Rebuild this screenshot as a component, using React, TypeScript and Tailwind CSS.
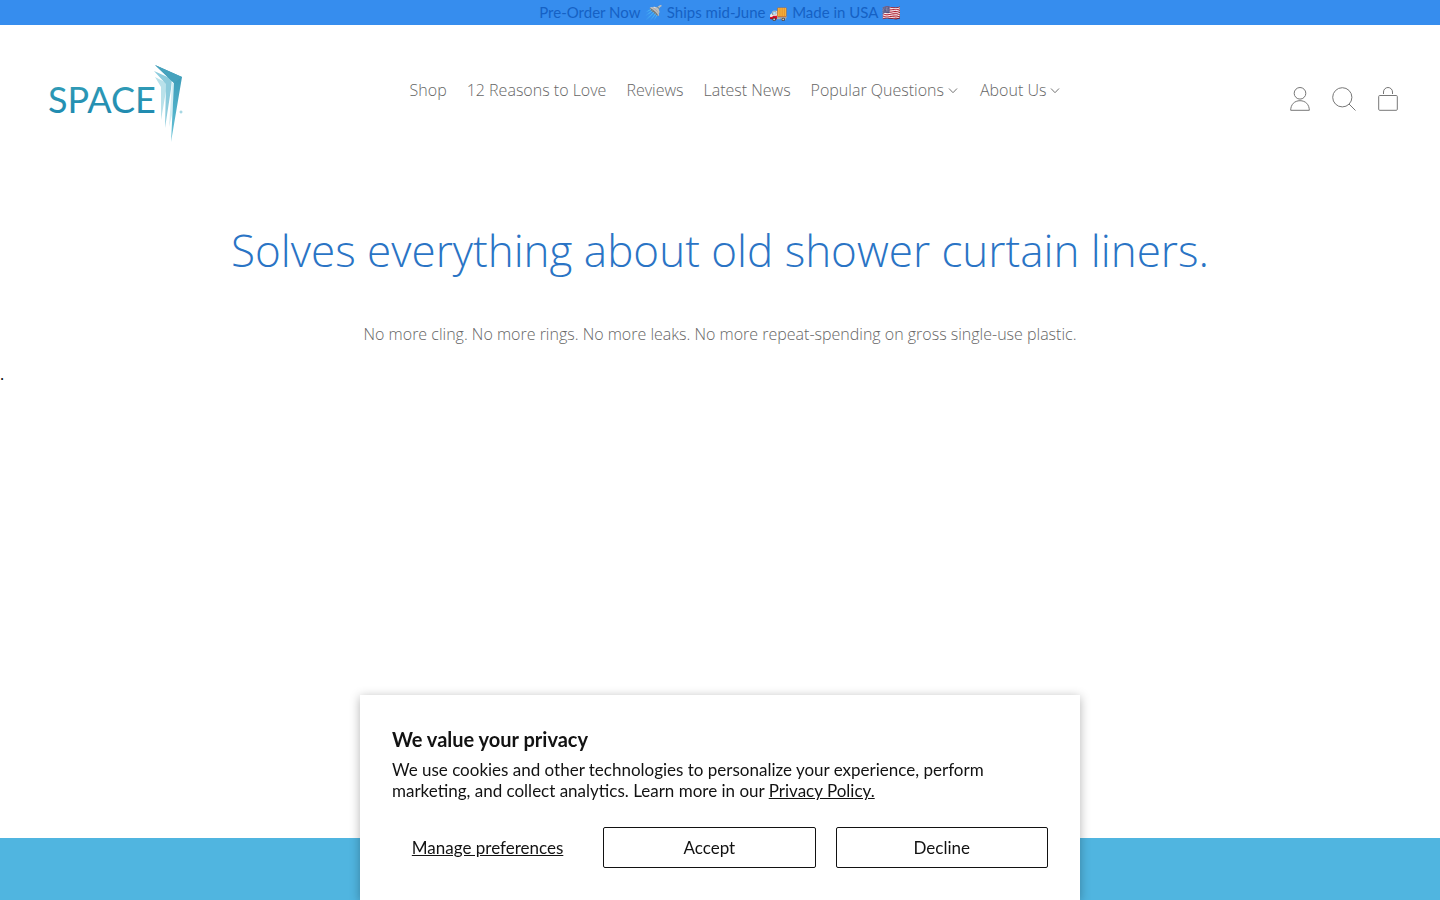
import { FC } from 'react';

type NavItem = { label: string; href: string; menu?: boolean };

const navItems: NavItem[] = [
  { label: 'Shop', href: '#shop' },
  { label: '12 Reasons to Love', href: '#reasons' },
  { label: 'Reviews', href: '#reviews' },
  { label: 'Latest News', href: '#news' },
  { label: 'Popular Questions', href: '#questions', menu: true },
  { label: 'About Us', href: '#about', menu: true },
];

const Logo: FC = () => (
  <svg width="136" height="80" viewBox="0 0 136 80" role="img" aria-label="SPACE">
    <defs>
      <linearGradient id="word" x1="0" y1="0" x2="0" y2="1">
        <stop offset="0" stopColor="#35a0b8" />
        <stop offset="1" stopColor="#1c86ae" />
      </linearGradient>
      <linearGradient id="blade" x1="0" y1="0" x2="0" y2="1">
        <stop offset="0" stopColor="#3796b3" />
        <stop offset="0.6" stopColor="#4fb0c9" />
        <stop offset="1" stopColor="#6cc4d8" />
      </linearGradient>
    </defs>
    <text
      x="0"
      y="48"
      fill="url(#word)"
      className="font-['Lato',sans-serif] text-[36px]"
    >
      SPACE
    </text>
    <path d="M107 12 L119 18 L118 26 L113 55 L113 22 Z" fill="#b9e1ea" />
    <path d="M106 6 L124 14 L123 24 L117 63 L118 19 Z" fill="#8ccbdc" />
    <path d="M124 18 L127 17 L124 50 L121 62 Z" fill="#d3edf3" />
    <path d="M107 0 L134 12 L123 77 L126 18 Z" fill="url(#blade)" />
    <path d="M107 0 L134 12 L126 18 Z" fill="#46a2bd" />
    <circle cx="133" cy="47" r="1" fill="none" stroke="#8bcbdc" />
  </svg>
);

const Caret: FC = () => (
  <svg width="12" height="8" viewBox="0 0 12 8" fill="none" stroke="#747474" aria-hidden="true">
    <path d="M1 2.5 L5 6.7 L9 2.5" />
  </svg>
);

const Navbar: FC = () => {
  return (
    <header className="flex items-start justify-between pt-10 pr-10 pl-12">
      <a href="#home">
        <Logo />
      </a>
      <nav className="flex gap-5 pt-[13px] text-[16px] leading-6 font-light text-[#666]">
        {navItems.map((item) => (
          <a key={item.label} href={item.href} className="flex items-center gap-1">
            {item.label}
            {item.menu && <Caret />}
          </a>
        ))}
      </nav>
      <div className="flex gap-5 pt-[22px]">
        <a href="#account" aria-label="Account">
          <svg width="24" height="24" viewBox="0 0 24 24" fill="none" stroke="#777">
            <circle cx="12" cy="6.3" r="5.8" />
            <path d="M2.7 23.3 C2.7 17.5 6.5 13.7 12 13.7 S21.3 17.5 21.3 23.3 Z" strokeLinejoin="round" />
          </svg>
        </a>
        <button type="button" aria-label="Search">
          <svg width="24" height="24" viewBox="0 0 24 24" fill="none" stroke="#777">
            <circle cx="10.3" cy="10.3" r="9.6" />
            <path d="M17 17 L23.5 23.5" />
          </svg>
        </button>
        <a href="#cart" aria-label="Cart">
          <svg width="24" height="24" viewBox="0 0 24 24" fill="none" stroke="#777">
            <rect x="2.7" y="8.5" width="18.6" height="14.8" rx="1" />
            <path d="M7.5 7 V5 A4.5 4.5 0 0 1 16.5 5 V7" />
          </svg>
        </a>
      </div>
    </header>
  );
};

const CookieBanner: FC = () => {
  return (
    <section
      aria-labelledby="privacy-title"
      className="fixed inset-x-0 bottom-0 mx-auto max-w-[720px] bg-white p-8 font-['Lato',sans-serif] text-[17px] text-[#121212] shadow-[0_2px_10px_rgba(0,0,0,0.3)]"
    >
      <h2 id="privacy-title" className="text-[20px] leading-6 font-bold">
        We value your privacy
      </h2>
      <p className="mt-2 leading-[21px]">
        We use cookies and other technologies to personalize your experience, perform marketing, and
        collect analytics. Learn more in our{' '}
        <a href="#privacy" className="underline">
          Privacy Policy.
        </a>
      </p>
      <div className="mt-[26px] grid grid-cols-[9fr_10fr_10fr] gap-5">
        <button type="button" className="h-[41px] underline">
          Manage preferences
        </button>
        <button type="button" className="h-[41px] rounded-xs border border-[#121212]">
          Accept
        </button>
        <button type="button" className="h-[41px] rounded-xs border border-[#121212]">
          Decline
        </button>
      </div>
    </section>
  );
};

const App: FC = () => {
  return (
    <div className="flex min-h-screen flex-col bg-white font-['Open_Sans',sans-serif]">
      <p className="bg-[#368dee] pb-px text-center font-['Lato',sans-serif] text-[15px] leading-6 text-[#1561c4]">
        Pre-Order Now 🚿 Ships mid-June 🚚 Made in USA 🇺🇸
      </p>
      <Navbar />
      <main className="flex flex-1 flex-col">
        <h1 className="mt-[73px] text-center text-[44px] leading-[64px] font-light text-[#2a74c5]">
          Solves everything about old shower curtain liners.
        </h1>
        <p className="mt-10 text-center text-[16px] leading-6 font-light text-[#666]">
          No more cling. No more rings. No more leaks. No more repeat-spending on gross single-use
          plastic.
        </p>
        <p className="mt-4 text-[16px] leading-6 text-black">.</p>
      </main>
      <footer className="h-[62px] bg-[#50b5e0]" />
      <CookieBanner />
    </div>
  );
};

export default App;
